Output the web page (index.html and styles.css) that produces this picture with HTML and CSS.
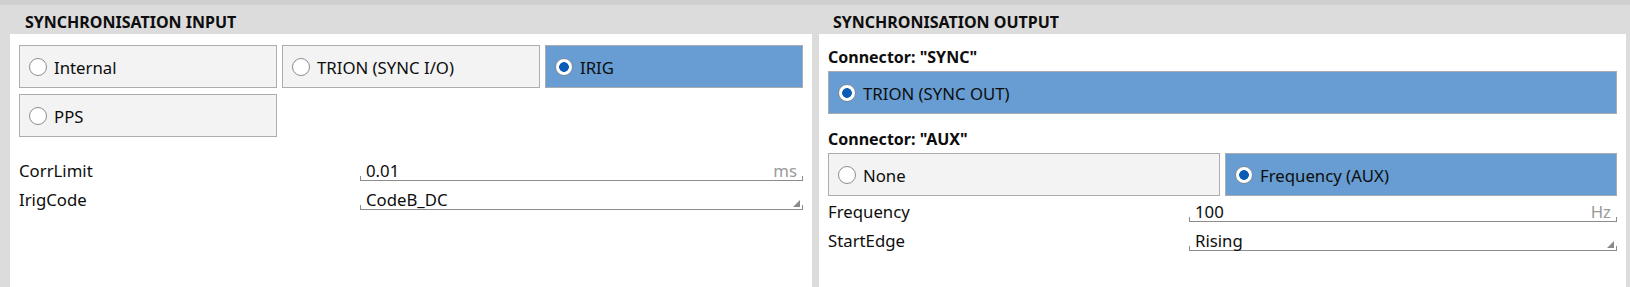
FILE: index.html
```html
<!DOCTYPE html>
<html>
<head>
<meta charset="utf-8">
<title>Synchronisation</title>
<link rel="stylesheet" href="styles.css">
</head>
<body>
<div class="page">
  <section class="panel panel-in">
    <h2 class="panel-title">SYNCHRONISATION INPUT</h2>
    <div class="panel-body">
      <div class="options three">
        <div class="opt"><span class="radio"></span><span class="opt-text">Internal</span></div>
        <div class="opt"><span class="radio"></span><span class="opt-text">TRION (SYNC I/O)</span></div>
        <div class="opt sel"><span class="radio"></span><span class="opt-text">IRIG</span></div>
        <div class="opt"><span class="radio"></span><span class="opt-text">PPS</span></div>
      </div>
      <div class="props props-in">
        <div class="prop-label">CorrLimit</div>
        <div class="field"><span class="val">0.01</span><span class="unit">ms</span></div>
        <div class="prop-label">IrigCode</div>
        <div class="field"><span class="val">CodeB_DC</span><svg class="drop" width="7" height="7" viewBox="0 0 7 7"><polygon points="7,0 7,7 0,7" fill="#8a8a8a"/></svg></div>
      </div>
    </div>
  </section>
  <section class="panel panel-out">
    <h2 class="panel-title">SYNCHRONISATION OUTPUT</h2>
    <div class="panel-body">
      <div class="conn-label first">Connector: "SYNC"</div>
      <div class="options one">
        <div class="opt sel"><span class="radio"></span><span class="opt-text">TRION (SYNC OUT)</span></div>
      </div>
      <div class="conn-label">Connector: "AUX"</div>
      <div class="options two">
        <div class="opt"><span class="radio"></span><span class="opt-text">None</span></div>
        <div class="opt sel"><span class="radio"></span><span class="opt-text">Frequency (AUX)</span></div>
      </div>
      <div class="props props-out">
        <div class="prop-label">Frequency</div>
        <div class="field"><span class="val">100</span><span class="unit">Hz</span></div>
        <div class="prop-label">StartEdge</div>
        <div class="field"><span class="val">Rising</span><svg class="drop" width="7" height="7" viewBox="0 0 7 7"><polygon points="7,0 7,7 0,7" fill="#8a8a8a"/></svg></div>
      </div>
    </div>
  </section>
</div>
</body>
</html>
```

FILE: styles.css
```css
* { box-sizing: border-box; }
html, body { margin: 0; padding: 0; }
body {
  background: #dcdcdc;
  font-family: "Noto Sans", "Open Sans", sans-serif;
  color: #0d0d0d;
  width: 1630px;
  height: 287px;
  overflow: hidden;
}
.page {
  border-top: 5px solid #cfcfcf;
  height: 287px;
  display: grid;
  grid-template-columns: 802px 807px;
  column-gap: 7px;
  padding: 0 4px 0 10px;
}
.panel {
  display: flex;
  flex-direction: column;
  min-height: 0;
}
.panel-title {
  margin: 0;
  height: 29px;
  padding: 5px 0 0 15px;
  font-size: 16px;
  line-height: 24px;
  font-weight: 700;
  color: #0d0d0d;
}
.panel-out .panel-title { padding-left: 14px; }
.panel-body {
  flex: 1;
  background: #fff;
  padding: 11px 9px;
}
.options {
  display: grid;
  column-gap: 5px;
  row-gap: 6px;
}
.options.three { grid-template-columns: repeat(3, 1fr); }
.options.two { grid-template-columns: repeat(2, 1fr); }
.options.one { grid-template-columns: 1fr; }
.opt {
  height: 43px;
  border: 1px solid #adadad;
  background: #f3f3f3;
  display: flex;
  align-items: center;
  font-size: 16.75px;
  line-height: 20px;
}
.opt.sel {
  background: #679dd2;
  border-color: #a8acb2;
}
.radio {
  width: 18px;
  height: 18px;
  border-radius: 50%;
  border: 1px solid #8d8d8d;
  background: #fff;
  margin: 0 7px 0 9px;
  flex: none;
}
.opt.sel .radio {
  background: radial-gradient(circle, #0a5cb6 0, #0a5cb6 4.5px, #fff 5.2px);
  border-color: #7d8a98;
}
.opt-text { padding-top: 2px; }
.props {
  display: grid;
  row-gap: 5px;
  font-size: 16.75px;
}
.props-in {
  grid-template-columns: 341px 1fr;
  margin-top: 20px;
}
.props-out {
  grid-template-columns: 361px 1fr;
  margin-top: 2px;
}
.prop-label, .field {
  height: 24px;
  line-height: 19px;
  display: flex;
  align-items: flex-end;
  border-bottom: 1px solid transparent;
  white-space: nowrap;
}
.field {
  border-bottom-color: #8c8c8c;
  background:
    linear-gradient(#8c8c8c, #8c8c8c) left bottom / 1px 4px no-repeat,
    linear-gradient(#8c8c8c, #8c8c8c) right bottom / 1px 4px no-repeat;
}
.val { padding-left: 6px; }
.unit {
  margin-left: auto;
  padding-right: 6px;
  color: #9a9a9a;
}
.drop {
  margin-left: auto;
  margin-right: 3px;
  margin-bottom: 2px;
  display: block;
}
.conn-label {
  font-size: 16px;
  font-weight: 700;
  line-height: 22px;
  margin: 14px 0 3px;
  color: #0d0d0d;
}
.conn-label.first { margin-top: 1px; }
```
